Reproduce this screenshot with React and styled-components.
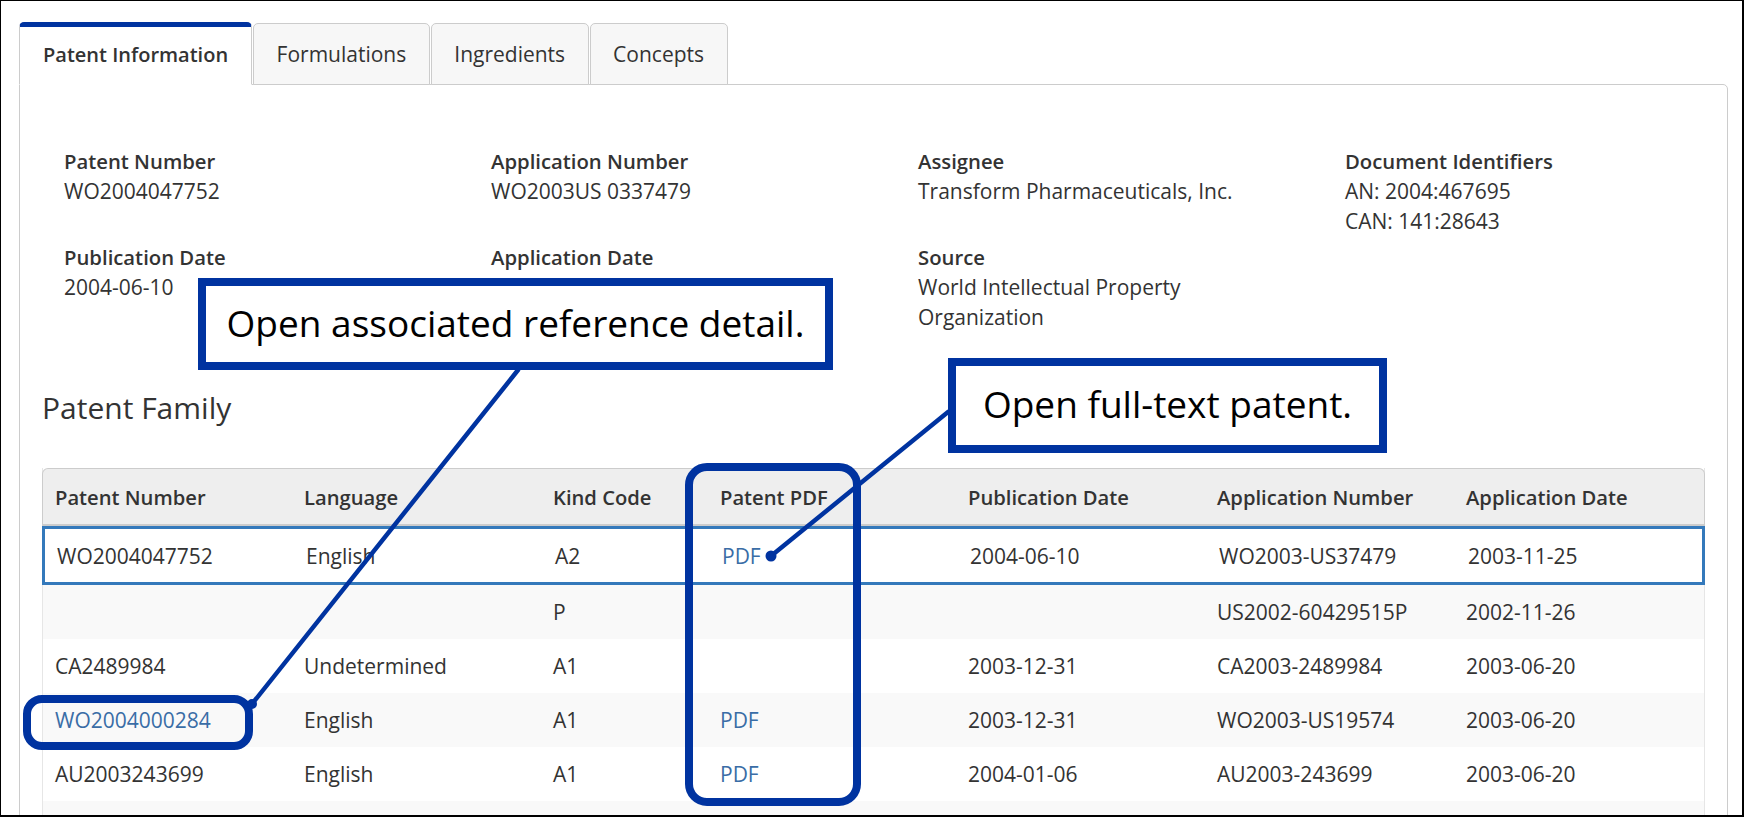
import styled, { createGlobalStyle } from "styled-components";

const GlobalStyle = createGlobalStyle`
  html, body {
    margin: 0;
    padding: 0;
    background: #fff;
  }
  body {
    font-family: "Open Sans", "Liberation Sans", sans-serif;
    color: #333;
  }
`;

const blue = "#0033a0";
const link = "#3a6da6";

const info = [
  [
    { label: "Patent Number", values: ["WO2004047752"] },
    { label: "Application Number", values: ["WO2003US 0337479"] },
    { label: "Assignee", values: ["Transform Pharmaceuticals, Inc."] },
    { label: "Document Identifiers", values: ["AN: 2004:467695", "CAN: 141:28643"] },
  ],
  [
    { label: "Publication Date", values: ["2004-06-10"] },
    { label: "Application Date", values: [] },
    { label: "Source", values: ["World Intellectual Property", "Organization"] },
    null,
  ],
];

const columns = [
  "Patent Number",
  "Language",
  "Kind Code",
  "Patent PDF",
  "Publication Date",
  "Application Number",
  "Application Date",
];

const family = [
  { number: "WO2004047752", lang: "English", kind: "A2", pdf: true, pub: "2004-06-10", appNo: "WO2003-US37479", appDate: "2003-11-25", selected: true },
  { number: "", lang: "", kind: "P", pdf: false, pub: "", appNo: "US2002-60429515P", appDate: "2002-11-26" },
  { number: "CA2489984", lang: "Undetermined", kind: "A1", pdf: false, pub: "2003-12-31", appNo: "CA2003-2489984", appDate: "2003-06-20" },
  { number: "WO2004000284", linked: true, lang: "English", kind: "A1", pdf: true, pub: "2003-12-31", appNo: "WO2003-US19574", appDate: "2003-06-20" },
  { number: "AU2003243699", lang: "English", kind: "A1", pdf: true, pub: "2004-01-06", appNo: "AU2003-243699", appDate: "2003-06-20" },
  { number: "", lang: "", kind: "", pdf: false, pub: "", appNo: "", appDate: "" },
];

const Frame = styled.div`
  position: relative;
  width: 1744px;
  height: 817px;
  box-sizing: border-box;
  border: 1px solid #000;
  border-right-width: 2px;
  border-bottom-width: 2px;
  padding: 21px 14px 0 18px;
  overflow: hidden;
  background: #fff;
`;

const TabBar = styled.div`
  display: flex;
  align-items: flex-end;
  height: 63px;
  margin-bottom: -1px;
  position: relative;
  z-index: 1;
`;

const Tab = styled.div`
  box-sizing: border-box;
  height: ${(p) => (p.$active ? "63px" : "62px")};
  padding: 0 ${(p) => (p.$active ? "23px" : "22.5px")};
  display: flex;
  align-items: center;
  border: 1px solid #ccc;
  border-top: ${(p) => (p.$active ? `5px solid ${blue}` : "1px solid #ccc")};
  border-bottom-color: ${(p) => (p.$active ? "#fff" : "#ccc")};
  border-radius: 5px 5px 0 0;
  background: ${(p) => (p.$active ? "#fff" : "#f7f7f7")};
  font-size: ${(p) => (p.$active ? "20px" : "21px")};
  font-weight: ${(p) => (p.$active ? 600 : 400)};
  color: #333;
  margin-right: 1px;
  padding-bottom: ${(p) => (p.$active ? "3px" : "0")};
`;

const Panel = styled.div`
  border: 1px solid #ccc;
  border-radius: 0 5px 0 0;
  padding: 0 22px;
  min-height: 800px;
`;

const InfoGrid = styled.div`
  display: grid;
  grid-template-columns: repeat(4, 427px);
  row-gap: 6px;
  padding: 61px 0 0 22px;
`;

const Field = styled.div`
  line-height: 30px;
`;

const FieldLabel = styled.div`
  font-size: 20.3px;
  font-weight: 600;
`;

const FieldValue = styled.div`
  font-size: 21px;
  font-weight: 400;
`;

const SectionTitle = styled.h2`
  margin: 56px 0 0 0;
  font-size: 30px;
  font-weight: 400;
  line-height: 40px;
  color: #333;
`;

const Table = styled.div`
  margin-top: 40px;
  border-left: 1px solid #e6e6e6;
  border-right: 1px solid #e6e6e6;
`;

const grid = "249px 249px 167px 248px 249px 249px 1fr";

const HeadRow = styled.div`
  display: grid;
  grid-template-columns: ${grid};
  align-items: center;
  box-sizing: border-box;
  height: 58px;
  margin: 0 -1px;
  background: #eee;
  border: 1px solid #ccc;
  border-bottom-width: 2px;
  border-radius: 6px 6px 0 0;
  font-size: 20.2px;
  font-weight: 600;
`;

const Row = styled.div`
  display: grid;
  grid-template-columns: ${grid};
  align-items: center;
  box-sizing: border-box;
  height: ${(p) => (p.$selected ? "59px" : "54px")};
  margin: ${(p) => (p.$selected ? "0 -1px" : "0")};
  border: ${(p) => (p.$selected ? "3px solid #3479bb" : "none")};
  background: ${(p) => (p.$striped ? "#f9f9f9" : "#fff")};
  font-size: 21px;
`;

const Cell = styled.div`
  padding: 0 12px;
  white-space: nowrap;
`;

const Link = styled.a`
  color: ${link};
  text-decoration: none;
`;

const Overlay = styled.svg`
  position: absolute;
  left: 0;
  top: 0;
  pointer-events: none;
  z-index: 5;
`;

const Callout = styled.div`
  position: absolute;
  z-index: 6;
  box-sizing: border-box;
  display: flex;
  align-items: center;
  justify-content: center;
  border: 8px solid ${blue};
  background: #fff;
  color: #000;
  font-size: 37px;
  white-space: nowrap;
  padding-bottom: 4px;
`;

export default function App() {
  return (
    <>
      <GlobalStyle />
      <Frame>
        <TabBar>
          <Tab $active>Patent Information</Tab>
          <Tab>Formulations</Tab>
          <Tab>Ingredients</Tab>
          <Tab>Concepts</Tab>
        </TabBar>
        <Panel>
          <InfoGrid>
            {info.flat().map((f, i) =>
              f ? (
                <Field key={i}>
                  <FieldLabel>{f.label}</FieldLabel>
                  {f.values.map((v) => (
                    <FieldValue key={v}>{v}</FieldValue>
                  ))}
                </Field>
              ) : (
                <div key={i} />
              )
            )}
          </InfoGrid>

          <SectionTitle>Patent Family</SectionTitle>

          <Table>
            <HeadRow>
              {columns.map((c) => (
                <Cell key={c}>{c}</Cell>
              ))}
            </HeadRow>
            {family.map((r, i) => (
              <Row key={i} $selected={r.selected} $striped={i % 2 === 1}>
                <Cell>{r.linked ? <Link href="#">{r.number}</Link> : r.number}</Cell>
                <Cell>{r.lang}</Cell>
                <Cell>{r.kind}</Cell>
                <Cell>{r.pdf && <Link href="#">PDF</Link>}</Cell>
                <Cell>{r.pub}</Cell>
                <Cell>{r.appNo}</Cell>
                <Cell>{r.appDate}</Cell>
              </Row>
            ))}
          </Table>
        </Panel>

        {/* annotation layer: highlight outlines and leader lines */}
        <Overlay width="1744" height="817" viewBox="0 0 1744 817">
          <g fill="none" stroke={blue} strokeWidth="8">
            <rect x="26" y="698" width="222" height="47" rx="15" />
            <rect x="688" y="466" width="168" height="335" rx="18" />
          </g>
          <g stroke={blue} strokeWidth="4.5" strokeLinecap="round">
            <line x1="517" y1="369" x2="251" y2="703" />
            <line x1="947" y1="411" x2="770" y2="555" />
          </g>
          <circle cx="251" cy="703" r="5" fill={blue} />
          <circle cx="770" cy="555" r="5.5" fill={blue} />
        </Overlay>

        <Callout style={{ left: 197, top: 277, width: 635, height: 92 }}>
          Open associated reference detail.
        </Callout>
        <Callout style={{ left: 947, top: 357, width: 439, height: 95 }}>
          Open full-text patent.
        </Callout>
      </Frame>
    </>
  );
}
